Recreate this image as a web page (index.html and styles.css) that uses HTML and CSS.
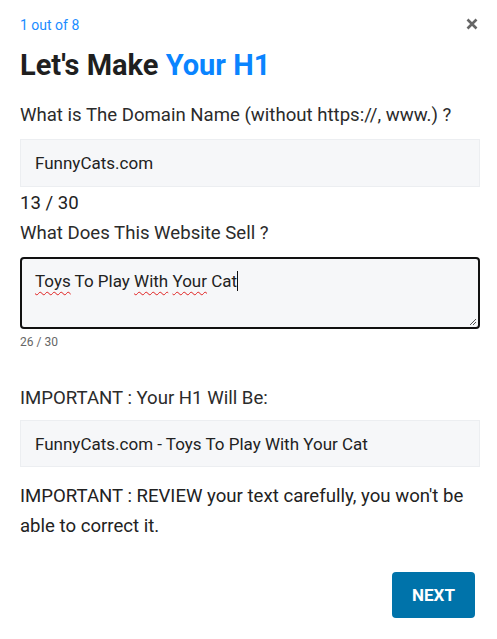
FILE: index.html
```html
<!DOCTYPE html>
<html>
<head>
<meta charset="utf-8">
<link rel="stylesheet" href="styles.css">
</head>
<body>
<div class="modal">
  <div class="top">
    <span class="step">1 out of 8</span>
    <svg class="close" width="12" height="12" viewBox="0 0 12 12"><path d="M1.5 1.5 L10.5 10.5 M10.5 1.5 L1.5 10.5" stroke="#666" stroke-width="2.6" stroke-linecap="butt"/></svg>
  </div>
  <h1 class="title">Let's Make <span class="accent">Your H1</span></h1>
  <div class="label">What is The Domain Name (without https://, www.) ?</div>
  <div class="field">FunnyCats.com</div>
  <div class="count">13 / 30</div>
  <div class="label label2">What Does This Website Sell ?</div>
  <div class="area">
    <span class="sp">Toys</span> To Play <span class="sp">With</span> <span class="sp">Your</span> Cat<span class="caret"></span>
    <svg class="grip" width="8" height="8" viewBox="0 0 8 8"><path d="M7 1 L1 7 M7 4 L4 7" stroke="#555" stroke-width="1"/></svg>
  </div>
  <div class="small">26 / 30</div>
  <div class="label label3">IMPORTANT : Your H1 Will Be:</div>
  <div class="field field2">FunnyCats.com - Toys To Play With Your Cat</div>
  <p class="note">IMPORTANT : REVIEW your text carefully, you won't be able to correct it.</p>
  <div class="actions"><button class="next">NEXT</button></div>
</div>
</body>
</html>
```
FILE: styles.css
```css
html, body { margin: 0; padding: 0; background: #fff; }
body { font-family: Roboto, "Noto Sans", sans-serif; color: #222; }
.modal { padding: 16px 17px 0 20px; }
.top { display: flex; justify-content: space-between; align-items: center; height: 18px; }
.step { font-size: 14px; color: #1a8cff; }
.close { margin-right: 2px; margin-top: -2px; }
.title { font-size: 29px; font-weight: 700; margin: 13px 0 0; line-height: 36px; color: #1f1f1f; }
.accent { color: #0a84ff; }
.label { font-size: 18.6px; color: #2b2b2b; margin-top: 20px; line-height: 24px; }
.field { margin-top: 12px; background: #f6f7f9; border: 1px solid #eceef1; height: 48px; box-sizing: border-box; padding: 0 14px; display: flex; align-items: center; font-size: 17px; color: #222; }
.field2 { margin-top: 10px; height: 47px; }
.count { font-size: 18.6px; color: #222; line-height: 24px; margin-top: 4px; }
.label2 { margin-top: 6px; }
.area { position: relative; margin-top: 12px; height: 72px; box-sizing: border-box; border: 2px solid #111; border-radius: 4px; background: #f6f7f9; padding: 11px 13px; font-size: 17px; line-height: 22px; color: #222; }
.sp { text-decoration: underline wavy #e02020; text-decoration-thickness: 1px; text-underline-offset: 4px; }
.caret { display: inline-block; width: 1px; height: 20px; background: #111; vertical-align: -4px; }
.grip { position: absolute; right: 1px; bottom: 1px; }
.small { font-size: 12px; color: #666; margin-top: 6px; }
.label3 { margin-top: 37px; }
.note { font-size: 18.6px; line-height: 29.5px; color: #222; margin: 15px 0 0; }
.actions { display: flex; justify-content: flex-end; margin-top: 31px; padding-right: 5px; }
.next { background: #0073aa; color: #fff; border: none; border-radius: 4px; width: 83px; height: 46px; font-family: Roboto, sans-serif; font-weight: 700; font-size: 17px; }
```
